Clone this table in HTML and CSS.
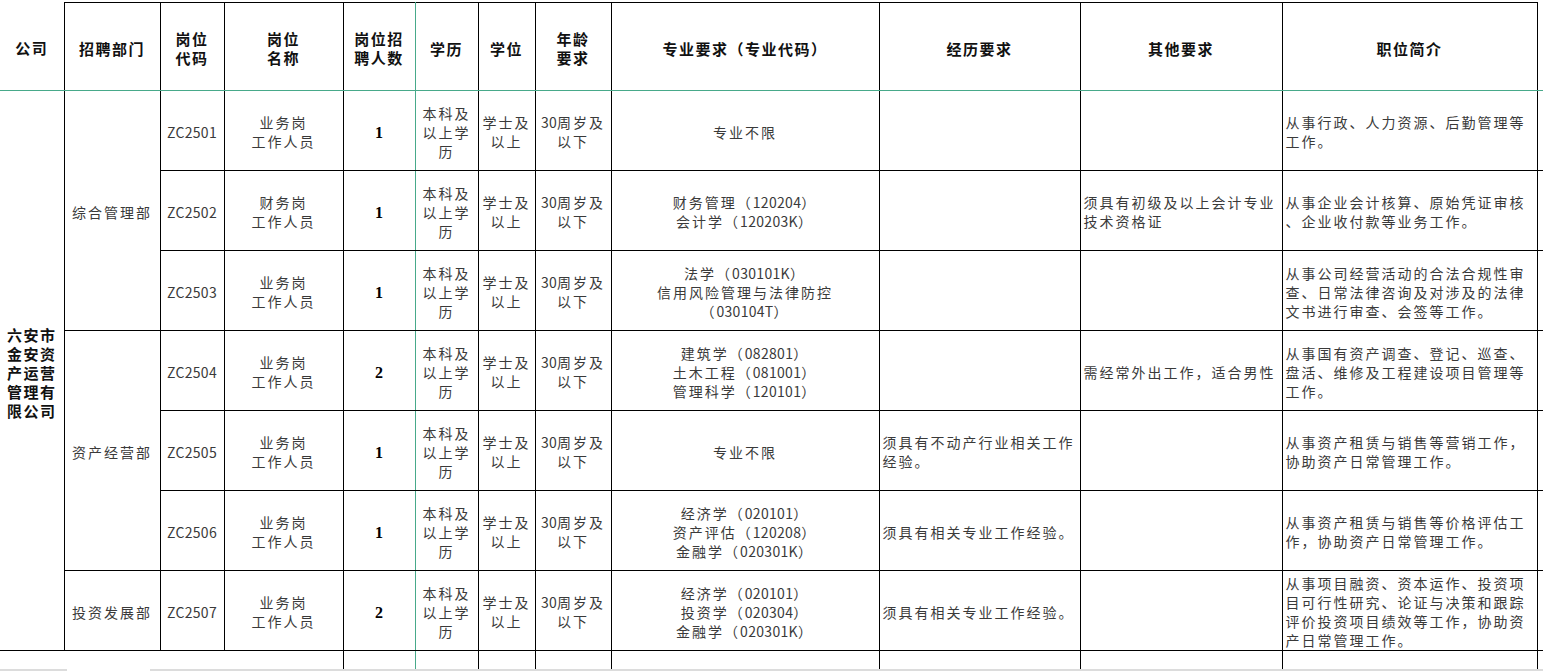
FILE: index.html
```html
<!DOCTYPE html>
<html lang="zh-CN">
<head>
<meta charset="utf-8">
<title>招聘岗位表</title>
<link rel="stylesheet" href="styles.css">
</head>
<body>
<div class="page">
  <div class="sheet">
    <table class="grid">
      <colgroup>
        <col class="w-company"><col class="w-dept"><col class="w-code"><col class="w-name"><col class="w-count">
        <col class="w-edu"><col class="w-degree"><col class="w-age"><col class="w-major"><col class="w-exp">
        <col class="w-other"><col class="w-intro"><col class="w-pad">
      </colgroup>
      <thead>
        <tr class="head-row">
          <th class="c-company">公司</th>
          <th>招聘部门</th>
          <th>岗位<br>代码</th>
          <th>岗位<br>名称</th>
          <th class="c-count">岗位招<br>聘人数</th>
          <th class="c-edu">学历</th>
          <th>学位</th>
          <th>年龄<br>要求</th>
          <th>专业要求（专业代码）</th>
          <th>经历要求</th>
          <th>其他要求</th>
          <th>职位简介</th>
          <th class="pad"></th>
        </tr>
      </thead>
      <tbody>
        <tr class="row first">
          <td class="c-company" rowspan="7">六安市<br>金安资<br>产运营<br>管理有<br>限公司</td>
          <td rowspan="3">综合管理部</td>
          <td class="code">ZC2501</td>
          <td>业务岗<br>工作人员</td>
          <td class="c-count">1</td>
          <td class="c-edu">本科及<br>以上学<br>历</td>
          <td>学士及<br>以上</td>
          <td><span class="n">30</span>周岁及<br>以下</td>
          <td>专业不限</td>
          <td class="left"></td>
          <td class="left"></td>
          <td class="left">从事行政、人力资源、后勤管理等<br>工作。</td>
          <td class="pad"></td>
        </tr>
        <tr class="row">
          <td class="code">ZC2502</td>
          <td>财务岗<br>工作人员</td>
          <td class="c-count">1</td>
          <td class="c-edu">本科及<br>以上学<br>历</td>
          <td>学士及<br>以上</td>
          <td><span class="n">30</span>周岁及<br>以下</td>
          <td>财务管理（<span class="n">120204</span>）<br>会计学（<span class="n">120203K</span>）</td>
          <td class="left"></td>
          <td class="left">须具有初级及以上会计专业<br>技术资格证</td>
          <td class="left">从事企业会计核算、原始凭证审核<br>、企业收付款等业务工作。</td>
          <td class="pad"></td>
        </tr>
        <tr class="row">
          <td class="code">ZC2503</td>
          <td>业务岗<br>工作人员</td>
          <td class="c-count">1</td>
          <td class="c-edu">本科及<br>以上学<br>历</td>
          <td>学士及<br>以上</td>
          <td><span class="n">30</span>周岁及<br>以下</td>
          <td>法学（<span class="n">030101K</span>）<br>信用风险管理与法律防控<br>（<span class="n">030104T</span>）</td>
          <td class="left"></td>
          <td class="left"></td>
          <td class="left">从事公司经营活动的合法合规性审<br>查、日常法律咨询及对涉及的法律<br>文书进行审查、会签等工作。</td>
          <td class="pad"></td>
        </tr>
        <tr class="row">
          <td rowspan="3">资产经营部</td>
          <td class="code">ZC2504</td>
          <td>业务岗<br>工作人员</td>
          <td class="c-count">2</td>
          <td class="c-edu">本科及<br>以上学<br>历</td>
          <td>学士及<br>以上</td>
          <td><span class="n">30</span>周岁及<br>以下</td>
          <td>建筑学（<span class="n">082801</span>）<br>土木工程（<span class="n">081001</span>）<br>管理科学（<span class="n">120101</span>）</td>
          <td class="left"></td>
          <td class="left">需经常外出工作，适合男性</td>
          <td class="left">从事国有资产调查、登记、巡查、<br>盘活、维修及工程建设项目管理等<br>工作。</td>
          <td class="pad"></td>
        </tr>
        <tr class="row">
          <td class="code">ZC2505</td>
          <td>业务岗<br>工作人员</td>
          <td class="c-count">1</td>
          <td class="c-edu">本科及<br>以上学<br>历</td>
          <td>学士及<br>以上</td>
          <td><span class="n">30</span>周岁及<br>以下</td>
          <td>专业不限</td>
          <td class="left">须具有不动产行业相关工作<br>经验。</td>
          <td class="left"></td>
          <td class="left">从事资产租赁与销售等营销工作，<br>协助资产日常管理工作。</td>
          <td class="pad"></td>
        </tr>
        <tr class="row">
          <td class="code">ZC2506</td>
          <td>业务岗<br>工作人员</td>
          <td class="c-count">1</td>
          <td class="c-edu">本科及<br>以上学<br>历</td>
          <td>学士及<br>以上</td>
          <td><span class="n">30</span>周岁及<br>以下</td>
          <td>经济学（<span class="n">020101</span>）<br>资产评估（<span class="n">120208</span>）<br>金融学（<span class="n">020301K</span>）</td>
          <td class="left">须具有相关专业工作经验。</td>
          <td class="left"></td>
          <td class="left">从事资产租赁与销售等价格评估工<br>作，协助资产日常管理工作。</td>
          <td class="pad"></td>
        </tr>
        <tr class="row">
          <td>投资发展部</td>
          <td class="code">ZC2507</td>
          <td>业务岗<br>工作人员</td>
          <td class="c-count">2</td>
          <td class="c-edu">本科及<br>以上学<br>历</td>
          <td>学士及<br>以上</td>
          <td><span class="n">30</span>周岁及<br>以下</td>
          <td>经济学（<span class="n">020101</span>）<br>投资学（<span class="n">020304</span>）<br>金融学（<span class="n">020301K</span>）</td>
          <td class="left">须具有相关专业工作经验。</td>
          <td class="left"></td>
          <td class="left">从事项目融资、资本运作、投资项<br>目可行性研究、论证与决策和跟踪<br>评价投资项目绩效等工作，协助资<br>产日常管理工作。</td>
          <td class="pad"></td>
        </tr>
        <tr class="tail">
          <td class="tail-lead" colspan="4"></td>
          <td class="c-count"></td>
          <td class="c-edu"></td>
          <td></td>
          <td></td>
          <td></td>
          <td></td>
          <td></td>
          <td></td>
          <td class="pad"></td>
        </tr>
      </tbody>
    </table>
  </div>
  <div class="hscroll">
    <div class="hscroll-a"></div>
    <div class="hscroll-gap"></div>
    <div class="hscroll-b"></div>
  </div>
</div>
</body>
</html>
```

FILE: styles.css
```css
* { box-sizing: border-box; }
html, body { margin: 0; padding: 0; background: #fff; }
body { font-family: "Noto Sans CJK SC", "Noto Sans", sans-serif; }

.page {
  width: 1543px;
  height: 671px;
  display: flex;
  flex-direction: column;
  overflow: hidden;
}
.sheet {
  flex: 1;
  min-height: 0;
  overflow: hidden;
  padding-top: 2px;
}

.grid {
  border-collapse: collapse;
  table-layout: fixed;
  width: 1543px;
}
.w-company { width: 64px; }
.w-dept { width: 96px; }
.w-code { width: 64px; }
.w-name { width: 119px; }
.w-count { width: 72px; }
.w-edu { width: 63px; }
.w-degree { width: 57px; }
.w-age { width: 76px; }
.w-major { width: 268px; }
.w-exp { width: 201px; }
.w-other { width: 202px; }
.w-intro { width: 255px; }
.w-pad { width: 6px; }

.grid th,
.grid td {
  border: 1px solid #000;
  padding: 3px 0 0;
  vertical-align: middle;
  text-align: center;
  white-space: nowrap;
  overflow: hidden;
}
.grid th {
  font-size: 15px;
  font-weight: 700;
  letter-spacing: 1.5px;
  line-height: 19px;
  color: #111;
}
.grid td {
  font-size: 14px;
  letter-spacing: 2px;
  line-height: 19px;
  color: #3a3a3a;
}

.head-row { height: 88px; }
.row { height: 80px; }
.tail { height: 24px; }

/* freeze-pane lines */
.head-row th { border-bottom-color: #48a98a; }
.first td { border-top-color: #48a98a; }
.grid .c-count { border-right-color: #48a98a; }
.grid .c-edu { border-left-color: #48a98a; }

.grid th.c-company { border-top: none; border-left: none; }
.grid td.c-company {
  border-left: none;
  font-size: 15px;
  font-weight: 700;
  letter-spacing: 1.5px;
  color: #111;
}

.grid td.c-count {
  font-family: "Liberation Serif", serif;
  font-size: 16px;
  font-weight: 700;
  letter-spacing: 0;
  color: #000;
}
.grid td.code { letter-spacing: 0.3px; }
.n { letter-spacing: 0.3px; }

.grid td.left { text-align: left; padding-left: 3px; }

.grid .pad { border-right: none; }
.grid th.pad { border-top: none; }

.grid td.tail-lead { border-left: none; }
.tail td { border-bottom: none; }

.hscroll {
  height: 2px;
  display: flex;
  flex: none;
}
.hscroll-a { width: 67px; background: #dcdcdc; }
.hscroll-gap { width: 83px; }
.hscroll-b { flex: 1; background: #dcdcdc; }
```
